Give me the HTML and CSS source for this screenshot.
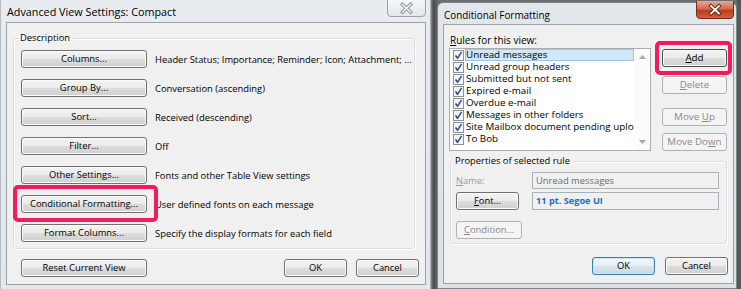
FILE: index.html
```html
<!DOCTYPE html>
<html>
<head>
<meta charset="utf-8">
<title>Advanced View Settings</title>
<link rel="stylesheet" href="styles.css">
</head>
<body>
<div class="screen">
  <div class="dlg dlg-left">
    <div class="titlebar">
      <span class="title">Advanced View Settings: Compact</span>
      <span class="close close-inactive">
        <svg width="39" height="17" viewBox="0 0 39 17">
          <defs>
            <linearGradient id="gi" x1="0" y1="0" x2="0" y2="1">
              <stop offset="0" stop-color="#f4f6f8"/>
              <stop offset="1" stop-color="#e2e6ea"/>
            </linearGradient>
          </defs>
          <path d="M0.5 0 V13 Q0.5 16.5 4 16.5 H35 Q38.5 16.5 38.5 13 V0" fill="url(#gi)" stroke="#9ba2aa"/>
          <path d="M15.5 4.5 L23.5 12 M23.5 4.5 L15.5 12" stroke="#8e949b" stroke-width="3.4" stroke-linecap="square"/>
          <path d="M15.5 4.5 L23.5 12 M23.5 4.5 L15.5 12" stroke="#fbfbfb" stroke-width="1.4" stroke-linecap="square"/>
        </svg>
      </span>
    </div>
    <div class="client client-left">
      <fieldset class="group group-desc">
        <legend>Description</legend>
        <div class="rows">
          <div class="row"><button class="btn wide">Columns...</button><span class="info">Header Status; Importance; Reminder; Icon; Attachment; ...</span></div>
          <div class="row"><button class="btn wide">Group By...</button><span class="info">Conversation (ascending)</span></div>
          <div class="row"><button class="btn wide">Sort...</button><span class="info">Received (descending)</span></div>
          <div class="row"><button class="btn wide">Filter...</button><span class="info">Off</span></div>
          <div class="row"><button class="btn wide">Other Settings...</button><span class="info">Fonts and other Table View settings</span></div>
          <div class="row"><span class="marked"><span class="mark mark-cf"></span><button class="btn wide">Conditional Formatting...</button></span><span class="info">User defined fonts on each message</span></div>
          <div class="row"><button class="btn wide">Format Columns...</button><span class="info">Specify the display formats for each field</span></div>
        </div>
      </fieldset>
      <div class="footer footer-left">
        <button class="btn wide">Reset Current View</button>
        <span class="spacer"></span>
        <button class="btn std">OK</button>
        <button class="btn std">Cancel</button>
      </div>
    </div>
  </div>
  <div class="gap"></div>
  <div class="dlg dlg-right">
    <div class="titlebar titlebar-right">
      <span class="title">Conditional Formatting</span>
      <span class="close close-active">
        <svg width="38" height="18" viewBox="0 0 38 18">
          <defs>
            <linearGradient id="gr" x1="0" y1="0" x2="0" y2="1">
              <stop offset="0" stop-color="#e7a898"/>
              <stop offset="0.45" stop-color="#d0684f"/>
              <stop offset="0.55" stop-color="#be3b20"/>
              <stop offset="1" stop-color="#d4613a"/>
            </linearGradient>
          </defs>
          <path d="M0.5 0 V14 Q0.5 17.5 4 17.5 H34 Q37.5 17.5 37.5 14 V0" fill="url(#gr)" stroke="#7d2b1c"/>
          <path d="M15 5 L23 12.5 M23 5 L15 12.5" stroke="#4a2018" stroke-width="3.6" stroke-linecap="square"/>
          <path d="M15 5 L23 12.5 M23 5 L15 12.5" stroke="#ffffff" stroke-width="1.8" stroke-linecap="square"/>
        </svg>
      </span>
    </div>
    <div class="client client-right">
      <div class="top">
        <div class="rules">
          <div class="label"><u>R</u>ules for this view:</div>
          <div class="list">
            <div class="items">
              <div class="item"><span class="cb"><svg width="11" height="11" viewBox="0 0 11 11"><rect x="0.5" y="0.5" width="10" height="10" fill="#f4f4f4" stroke="#8f8f8f"/><path d="M2.5 5.5 L4.5 8.2 L8.5 2.2" fill="none" stroke="#2b4495" stroke-width="1.5"/></svg></span><span class="txt sel">Unread messages</span></div>
              <div class="item"><span class="cb"><svg width="11" height="11" viewBox="0 0 11 11"><rect x="0.5" y="0.5" width="10" height="10" fill="#f4f4f4" stroke="#8f8f8f"/><path d="M2.5 5.5 L4.5 8.2 L8.5 2.2" fill="none" stroke="#2b4495" stroke-width="1.5"/></svg></span><span class="txt">Unread group headers</span></div>
              <div class="item"><span class="cb"><svg width="11" height="11" viewBox="0 0 11 11"><rect x="0.5" y="0.5" width="10" height="10" fill="#f4f4f4" stroke="#8f8f8f"/><path d="M2.5 5.5 L4.5 8.2 L8.5 2.2" fill="none" stroke="#2b4495" stroke-width="1.5"/></svg></span><span class="txt">Submitted but not sent</span></div>
              <div class="item"><span class="cb"><svg width="11" height="11" viewBox="0 0 11 11"><rect x="0.5" y="0.5" width="10" height="10" fill="#f4f4f4" stroke="#8f8f8f"/><path d="M2.5 5.5 L4.5 8.2 L8.5 2.2" fill="none" stroke="#2b4495" stroke-width="1.5"/></svg></span><span class="txt">Expired e-mail</span></div>
              <div class="item"><span class="cb"><svg width="11" height="11" viewBox="0 0 11 11"><rect x="0.5" y="0.5" width="10" height="10" fill="#f4f4f4" stroke="#8f8f8f"/><path d="M2.5 5.5 L4.5 8.2 L8.5 2.2" fill="none" stroke="#2b4495" stroke-width="1.5"/></svg></span><span class="txt">Overdue e-mail</span></div>
              <div class="item"><span class="cb"><svg width="11" height="11" viewBox="0 0 11 11"><rect x="0.5" y="0.5" width="10" height="10" fill="#f4f4f4" stroke="#8f8f8f"/><path d="M2.5 5.5 L4.5 8.2 L8.5 2.2" fill="none" stroke="#2b4495" stroke-width="1.5"/></svg></span><span class="txt">Messages in other folders</span></div>
              <div class="item"><span class="cb"><svg width="11" height="11" viewBox="0 0 11 11"><rect x="0.5" y="0.5" width="10" height="10" fill="#f4f4f4" stroke="#8f8f8f"/><path d="M2.5 5.5 L4.5 8.2 L8.5 2.2" fill="none" stroke="#2b4495" stroke-width="1.5"/></svg></span><span class="txt">Site Mailbox document pending upload</span></div>
              <div class="item"><span class="cb"><svg width="11" height="11" viewBox="0 0 11 11"><rect x="0.5" y="0.5" width="10" height="10" fill="#f4f4f4" stroke="#8f8f8f"/><path d="M2.5 5.5 L4.5 8.2 L8.5 2.2" fill="none" stroke="#2b4495" stroke-width="1.5"/></svg></span><span class="txt">To Bob</span></div>
            </div>
            <div class="scroll">
              <span class="arrow"><svg width="7" height="4" viewBox="0 0 7 4"><path d="M0 4 L3.5 0 L7 4 Z" fill="#a9a9a9"/></svg></span>
              <span class="arrow"><svg width="7" height="4" viewBox="0 0 7 4"><path d="M0 0 L3.5 4 L7 0 Z" fill="#a9a9a9"/></svg></span>
            </div>
          </div>
        </div>
        <div class="side">
          <span class="marked"><span class="mark mark-add"></span><button class="btn side-btn focus"><u>A</u>dd</button></span>
          <button class="btn side-btn disabled b-delete"><u>D</u>elete</button>
          <button class="btn side-btn disabled b-up">Move <u>U</u>p</button>
          <button class="btn side-btn disabled b-down">Move Do<u>w</u>n</button>
        </div>
      </div>
      <fieldset class="group group-props">
        <legend>Properties of selected rule</legend>
        <div class="prop-row">
          <span class="plabel disabled-text"><u>N</u>ame:</span>
          <span class="field name-field">Unread messages</span>
        </div>
        <div class="prop-row prop-font">
          <span class="plabel"><button class="btn font-btn"><u>F</u>ont...</button></span>
          <span class="field font-field">11 pt. Segoe UI</span>
        </div>
        <div class="prop-row prop-cond">
          <button class="btn cond-btn disabled"><u>C</u>ondition...</button>
        </div>
      </fieldset>
      <div class="footer footer-right">
        <button class="btn std default">OK</button>
        <button class="btn std">Cancel</button>
      </div>
    </div>
  </div>
  <div class="edge"></div>
</div>
</body>
</html>
```

FILE: styles.css
```css
* { box-sizing: border-box; }
html, body { margin: 0; padding: 0; }
body {
  width: 741px;
  height: 289px;
  overflow: hidden;
  background: #6a6d71;
  font-family: "Open Sans", "Noto Sans", sans-serif;
  font-size: 9.4px;
  color: #000;
}
.screen { display: flex; height: 289px; }

.dlg { display: flex; flex-direction: column; height: 289px; flex: none; }
.dlg-left {
  width: 431px;
  background: linear-gradient(180deg, #e8ebef 0%, #e3e7eb 100%);
  border-left: 1px solid #b6bcc3;
  border-right: 1px solid #a5abb2;
}
.gap {
  width: 6px;
  flex: none;
  background: linear-gradient(90deg, #8a8d91 0%, #4a4c50 40%, #5d6064 100%);
}
.dlg-right {
  width: 300px;
  margin-top: 2px;
  height: 287px;
  background: linear-gradient(180deg, #e2e6ea 0%, #dce1e6 100%);
  border: 1px solid #7f858c;
  border-radius: 6px 6px 0 0;
}
.edge { flex: 1; background: #55585c; }

.titlebar {
  height: 22px;
  display: flex;
  justify-content: space-between;
  align-items: flex-start;
  padding-left: 6px;
  padding-right: 4px;
}
.titlebar .title { font-size: 10.8px; line-height: 14px; margin-top: 5px; white-space: nowrap; }
.titlebar-right { height: 21px; padding-left: 6px; padding-right: 2px; }
.titlebar-right .title { font-size: 9.9px; margin-top: 5px; }
.close { display: block; height: 17px; }
.close svg { display: block; }
.close-active { margin-top: -2px; }

.client {
  background: #f0f0f0;
  border: 1px solid #98a2ad;
}
.client-left {
  margin: 0 0 0 5px;
  width: 420px;
  height: 263px;
  padding: 8px 6px 5px 6px;
}
.client-right {
  margin: 0 2px 0 5px;
  height: 260px;
  padding: 8px 5px 5px 5px;
}

/* buttons */
.btn {
  display: block;
  flex: none;
  height: 18px;
  padding: 0;
  margin: 0;
  font: inherit;
  color: #000;
  text-align: center;
  line-height: 16px;
  border: 1px solid #707070;
  border-radius: 3px;
  background: linear-gradient(180deg, #f3f3f3 0%, #ebebeb 48%, #dcdcdc 52%, #d0d0d0 100%);
  box-shadow: inset 0 0 0 1px #fbfbfb;
  white-space: nowrap;
}
.btn u { text-decoration-thickness: 1px; text-underline-offset: 1px; }
.btn.wide { width: 126px; }
.btn.std { width: 63px; }
.btn.disabled {
  border-color: #adb2b5;
  background: #f4f4f4;
  color: #8a8a8a;
  box-shadow: none;
}
.btn.default {
  border-color: #3c7fb1;
  box-shadow: inset 0 0 0 1px #c9e6f8;
  background: linear-gradient(180deg, #f1f6f9 0%, #e7eff4 48%, #d8e3ea 52%, #cbd9e2 100%);
}
.btn.focus { border-color: #4c4c4c; }

/* group boxes */
.group {
  margin: 0;
  min-width: 0;
  border: 1px solid #d5dfe5;
  border-radius: 3px;
  box-shadow: inset 1px 1px 0 #ffffff, 1px 1px 0 #ffffff;
}
.group legend {
  padding: 0 2px;
  margin-left: -3px;
  line-height: 14px;
}
.group-desc {
  width: 402px;
  padding: 5px 7px 6px 7px;
}
.rows { display: flex; flex-direction: column; gap: 11px; }
.row { display: flex; align-items: center; height: 18px; }
.info { margin-left: 8px; white-space: nowrap; }

.marked { position: relative; display: block; flex: none; }
.mark {
  position: absolute;
  border: 4px solid #f51a5e;
  border-radius: 5px;
}
.mark-cf { left: -8px; top: -10px; width: 145px; height: 37px; }
.mark-add { left: -7px; top: -8px; width: 77px; height: 34px; }

.footer { display: flex; align-items: center; }
.footer-left { margin-top: 10px; padding-left: 8px; gap: 9px; }
.footer-left .spacer { flex: 1; }

/* right dialog */
.top { display: flex; }
.rules { width: 202px; flex: none; }
.label { font-size: 10px; line-height: 14px; height: 15px; padding-left: 1px; }
.list {
  display: flex;
  height: 103px;
  background: #fff;
  border: 1px solid #abadb3;
}
.items { flex: 1; min-width: 0; overflow: hidden; font-size: 9.8px; }
.item { display: flex; align-items: center; height: 12px; white-space: nowrap; }
.cb { display: block; flex: none; width: 11px; height: 11px; margin-left: 3px; margin-right: 1px; }
.cb svg { display: block; }
.txt { flex: 1; line-height: 12px; height: 12px; padding-left: 1px; overflow: hidden; }
.txt.sel { background: #d3e7fa; box-shadow: inset 0 0 0 1px #9cc6ee; }
.scroll {
  width: 16px;
  flex: none;
  display: flex;
  flex-direction: column;
  justify-content: space-between;
  background: #fbfbfb;
}
.arrow { height: 16px; display: flex; align-items: center; justify-content: center; }
.arrow svg { display: block; }

.side { margin-left: 11px; padding-top: 16px; display: flex; flex-direction: column; font-size: 9.8px; }
.side-btn { width: 65px; }
.b-delete { margin-top: 9px; }
.b-up { margin-top: 14px; }
.b-down { margin-top: 7px; }

.group-props {
  width: 277px;
  margin-top: 3px;
  margin-left: 1px;
  padding: 4px 7px 4px 5px;
}
.prop-row { display: flex; align-items: center; }
.plabel { width: 76px; flex: none; }
.disabled-text { color: #9a9a9a; }
.field {
  flex: 1;
  height: 17px;
  border: 1px solid #abb1b8;
  background: #f0f0f0;
  padding-left: 3px;
  line-height: 15px;
  color: #6d6d6d;
  white-space: nowrap;
}
.prop-font { margin-top: 3px; }
.font-field { height: 18px; line-height: 16px; color: #1c6cc4; font-weight: bold; font-size: 9.2px; }
.font-btn { width: 63px; }
.prop-cond { margin-top: 11px; }
.cond-btn { width: 66px; }

.footer-right { margin-top: 13px; justify-content: flex-end; gap: 10px; }
```
